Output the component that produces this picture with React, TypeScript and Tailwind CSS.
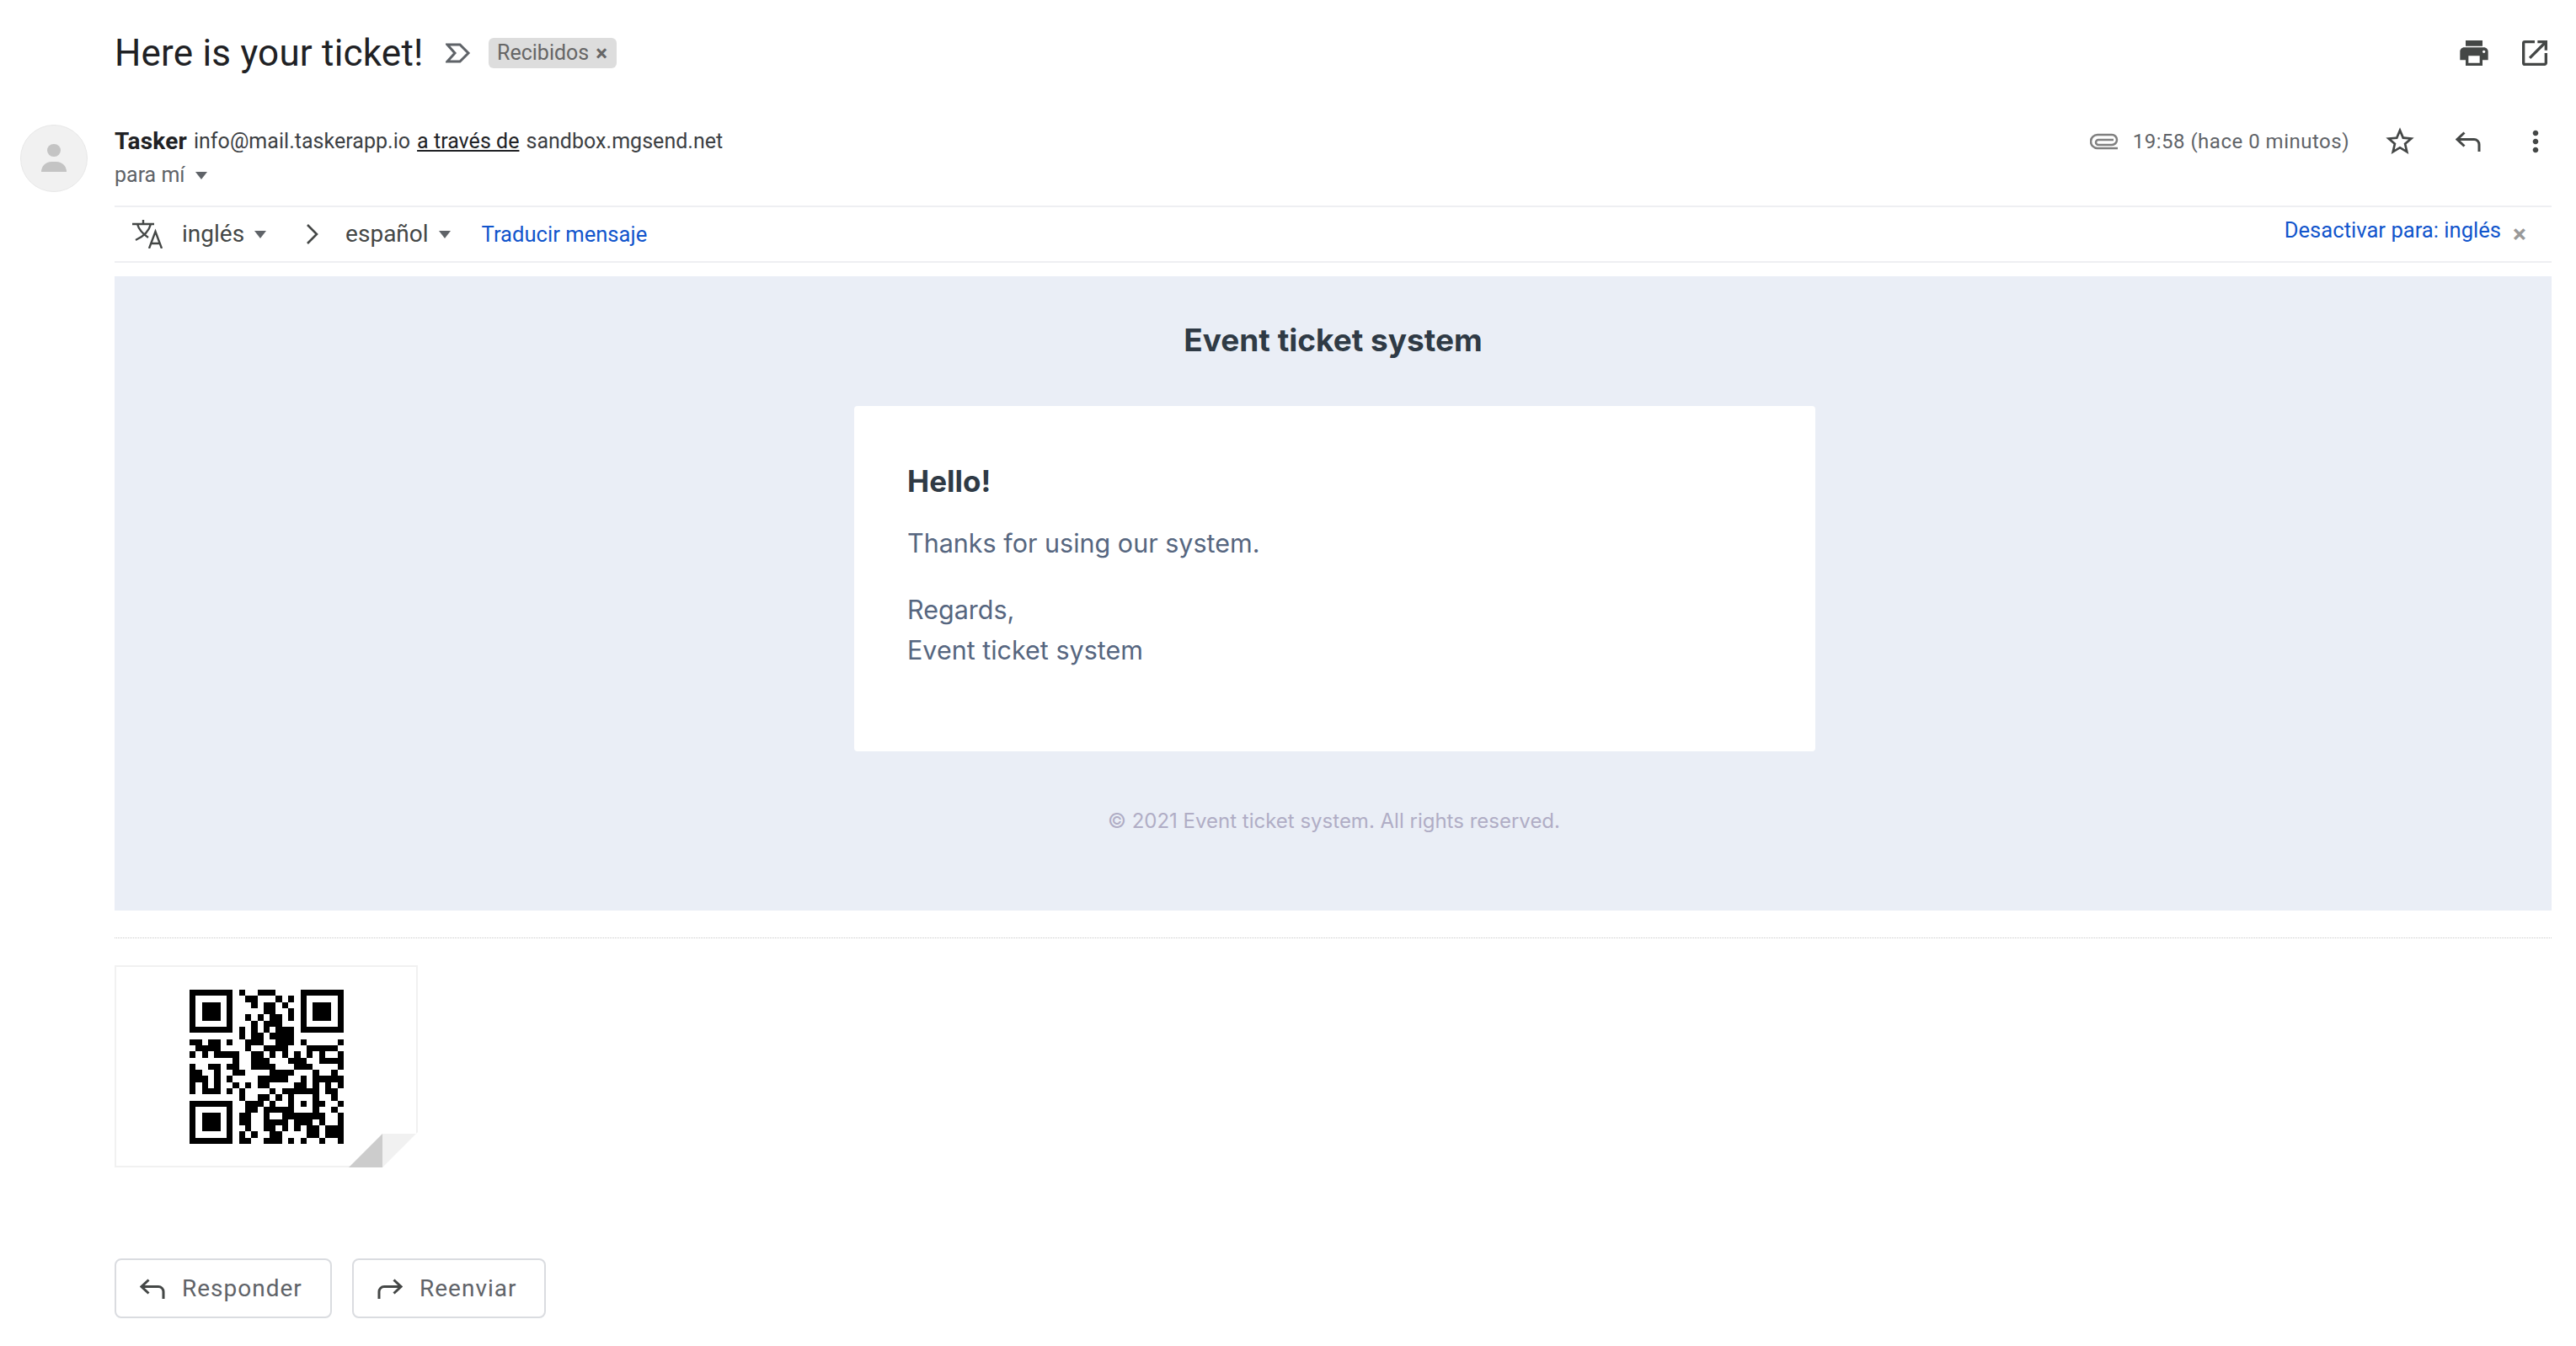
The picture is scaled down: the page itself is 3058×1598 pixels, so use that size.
import { MdPrint, MdOpenInNew, MdStarBorder, MdMoreVert } from 'react-icons/md';

// dark modules per row, finder patterns get added on top
const QR_ROWS: number[][] = [
  [8, 11, 12, 13],
  [9, 10, 14, 16],
  [10, 12, 13, 15],
  [12, 13, 16],
  [9, 11, 13, 14, 16],
  [10, 12, 13, 14],
  [8, 10, 12, 14, 15, 16],
  [8, 10, 11, 13, 14, 15, 16],
  [0, 1, 3, 4, 6, 9, 10, 11, 14, 15, 16, 18, 24],
  [1, 2, 3, 4, 9, 12, 13, 14, 15, 19, 20, 21, 22, 23],
  [0, 2, 4, 5, 6, 7, 10, 11, 13, 15, 17, 19, 21, 24],
  [7, 10, 11, 12, 16, 17, 18, 21, 22, 23, 24],
  [0, 3, 4, 6, 7, 10, 11, 12, 13, 17, 18, 19, 24],
  [0, 1, 4, 7, 8, 13, 14, 15, 16, 20, 23],
  [0, 1, 2, 4, 6, 11, 12, 13, 14, 15, 18, 20, 21, 22, 23, 24],
  [0, 2, 4, 7, 9, 11, 12, 17, 18, 20, 22, 24],
  [0, 2, 3, 4, 6, 8, 13, 15, 16, 17, 18, 19, 20, 22, 23],
  [8, 11, 12, 14, 16, 20, 23],
  [9, 10, 11, 13, 16, 18, 20, 21, 24],
  [9, 10, 12, 13, 14, 15, 16, 20, 23],
  [8, 9, 12, 15, 16, 17, 18, 19, 20, 21, 24],
  [8, 9, 12, 13, 14, 15, 17, 18, 19, 21, 24],
  [9, 12, 13, 15, 17, 19, 20, 22, 23, 24],
  [8, 10, 13, 14, 19, 20, 22, 23, 24],
  [8, 9, 12, 13, 14, 16, 18, 21, 24],
];

function Finder({ x, y }: { x: number; y: number }) {
  return (
    <>
      <rect x={x} y={y} width={7} height={7} fill="#000" />
      <rect x={x + 1} y={y + 1} width={5} height={5} fill="#fff" />
      <rect x={x + 2} y={y + 2} width={3} height={3} fill="#000" />
    </>
  );
}

function QrCode() {
  return (
    <svg viewBox="0 0 25 25" className="h-[183px] w-[183px]" shapeRendering="crispEdges">
      {QR_ROWS.map((cols, r) =>
        cols.map((c) => <rect key={`${r}-${c}`} x={c} y={r} width={1} height={1} fill="#000" />)
      )}
      <Finder x={0} y={0} />
      <Finder x={18} y={0} />
      <Finder x={0} y={18} />
    </svg>
  );
}

function Caret({ className }: { className?: string }) {
  return (
    <svg viewBox="0 0 14 9" className={`h-[9px] w-[14px] ${className ?? ''}`}>
      <path d="M0 0h14L7 9z" fill="#5f6368" />
    </svg>
  );
}

function ReplyArrow({ className }: { className?: string }) {
  return (
    <svg viewBox="0 0 30 24" className={className} fill="none" stroke="#444746" strokeWidth="3">
      <path d="M10.5 1.5 2 9.5l8.5 8" />
      <path d="M2 9.5h20a6 6 0 0 1 6 6V24" />
    </svg>
  );
}

function ForwardArrow({ className }: { className?: string }) {
  return (
    <svg viewBox="0 0 30 24" className={className} fill="none" stroke="#444746" strokeWidth="3">
      <path d="M19.5 1.5 28 9.5l-8.5 8" />
      <path d="M28 9.5H8a6 6 0 0 0-6 6V24" />
    </svg>
  );
}

function ActionButton({ label, icon, width }: { label: string; icon: React.ReactNode; width: string }) {
  return (
    <button className={`flex h-[71px] items-center gap-[20px] rounded-[8px] border-2 border-[#dadce0] pl-[28px] ${width}`}>
      {icon}
      <span className="font-['Roboto',sans-serif] text-[28px] tracking-[1px] text-[#5f6368]">{label}</span>
    </button>
  );
}

export default function App() {
  return (
    <div className="flex h-[1598px] w-[3058px] bg-white font-['Roboto',sans-serif]">
      {/* avatar column */}
      <div className="w-[136px] shrink-0 pl-6 pt-[148px]">
        <div className="flex h-20 w-20 flex-col items-center rounded-full border border-[#e8e8e8] bg-[#f1f1f1] pt-[22px]">
          <div className="h-[15px] w-[16px] rounded-full bg-[#c4c4c4]" />
          <div className="mt-[6px] h-[12px] w-[30px] rounded-t-[14px] bg-[#c4c4c4]" />
        </div>
      </div>

      <div className="w-[2893px] shrink-0">
        {/* subject */}
        <div className="flex h-[126px] items-center">
          <h1 className="text-[44px] font-normal tracking-[0.2px] text-[#202124]">Here is your ticket!</h1>
          <svg viewBox="0 0 30 24" className="ml-[26px] h-6 w-[30px]" fill="none" stroke="#5f6368" strokeWidth="3">
            <path d="M2 2h15l10 10-10 10H2l9-10z" />
          </svg>
          <div className="ml-[21px] flex h-9 w-[152px] items-center justify-center gap-2 rounded-[6px] bg-[#dddddd] text-[25px] text-[#666666]">
            Recibidos
            <span className="text-[26px] font-bold leading-none">×</span>
          </div>
          <MdPrint className="ml-auto h-10 w-10 text-[#444746]" />
          <MdOpenInNew className="ml-8 h-10 w-10 text-[#444746]" />
        </div>

        {/* sender */}
        <div className="flex h-[120px] items-start border-b-2 border-[#eeeff2] pt-[24px]">
          <div className="text-[#202124]">
            <div className="flex h-9 items-center gap-2 text-[25px] tracking-[0.03px]">
              <span className="text-[28px] font-bold tracking-[0.2px]">Tasker</span>
              <span className="text-[#3c4043]">info@mail.taskerapp.io</span>
              <span className="underline">a través de</span>
              <span className="text-[#3c4043]">sandbox.mgsend.net</span>
            </div>
            <div className="mt-[4px] flex h-9 items-center gap-[12px] text-[25px] text-[#5f6368]">
              para mí
              <Caret className="mt-[1px]" />
            </div>
          </div>
          <div className="-mr-[1px] ml-auto flex h-9 items-center text-2xl text-[#5f6368]">
            <svg viewBox="0 0 34 20" className="mr-[17px] h-5 w-[34px]" fill="none" stroke="#808080" strokeWidth="2.5">
              <path d="M33 18H9a8 8 0 0 1 0-16h17a6 6 0 0 1 0 12H10a3 3 0 0 1 0-6h18" />
            </svg>
            <span className="tracking-[0.5px]">19:58 (hace 0 minutos)</span>
            <MdStarBorder className="ml-[40px] h-[40px] w-[40px] text-[#444746]" />
            <ReplyArrow className="ml-[46px] h-6 w-[30px]" />
            <MdMoreVert className="ml-[45px] h-10 w-10 text-[#444746]" />
          </div>
        </div>

        {/* translate bar */}
        <div className="flex h-[66px] items-center border-b-2 border-[#eeeff2] text-[28px] text-[#444746]">
          <svg viewBox="0 0 37 34" className="ml-[21px] h-[34px] w-[37px]" fill="none" stroke="#444746" strokeWidth="2.4">
            <path d="M0 5h26M13 0v5M22 5c-2 8-9 15-18 19M6 5c2 7 7 12 13 16" />
            <path d="M20 34l7.5-20L35 34M22 28h11" />
          </svg>
          <span className="ml-[22px]">inglés</span>
          <Caret className="ml-3 mt-[1px]" />
          <svg viewBox="0 0 16 24" className="ml-[47px] h-6 w-4" fill="none" stroke="#444746" strokeWidth="2.6">
            <path d="M2 1l11 11L2 23" />
          </svg>
          <span className="ml-[31px]">español</span>
          <Caret className="ml-3 mt-[1px]" />
          <a className="ml-[37px] text-[25.6px] text-[#1155cc]">Traducir mensaje</a>
          <a className="mb-[10px] ml-auto text-[25.6px] text-[#1155cc]">Desactivar para: inglés</a>
          <span className="ml-[14px] mr-[30px] text-[30px] font-bold leading-none text-[#999999]">×</span>
        </div>

        {/* message */}
        <div className="mt-4 h-[753px] bg-[#eaeef6] pt-[51px] font-['Inter',sans-serif]">
          <div className="h-[50px] text-center text-[37px] font-bold leading-[50px] text-[#2f3a45]">
            Event ticket system
          </div>
          <div className="ml-[878px] mt-[53px] h-[410px] w-[1141px] rounded-[4px] bg-white pl-[63px] pt-[64px]">
            <div className="text-[35px] font-bold leading-[50px] text-[#2f3a45]">Hello!</div>
            <p className="mt-[25px] text-[30.5px] leading-[48px] text-[#56667f]">Thanks for using our system.</p>
            <p className="mt-[31px] text-[30.5px] leading-[48px] text-[#56667f]">
              Regards,
              <br />
              Event ticket system
            </p>
          </div>
          <div className="ml-[877px] mt-[68px] w-[1141px] text-center text-2xl leading-[30px] text-[#b0adc5]">
            © 2021 Event ticket system. All rights reserved.
          </div>
        </div>

        <div className="mt-[32px] border-t border-dotted border-[#c8c8c8]" />

        {/* attachment */}
        <div className="relative mt-[32px] flex h-[240px] w-[360px] items-center justify-center border-2 border-[#f1f1f1]">
          <QrCode />
          <svg viewBox="0 0 82 42" className="absolute -bottom-[2px] -right-[2px] h-[42px] w-[82px]">
            <path d="M82 0v42H40z" fill="#fff" />
            <path d="M40 2h40L40 42z" fill="#f1f1f1" />
            <path d="M0 42 40 2v40z" fill="#cccccc" />
          </svg>
        </div>

        {/* reply / forward */}
        <div className="mt-[108px] flex gap-6">
          <ActionButton label="Responder" width="w-[258px]" icon={<ReplyArrow className="h-6 w-[30px]" />} />
          <ActionButton label="Reenviar" width="w-[230px]" icon={<ForwardArrow className="h-6 w-[30px]" />} />
        </div>
      </div>
    </div>
  );
}
